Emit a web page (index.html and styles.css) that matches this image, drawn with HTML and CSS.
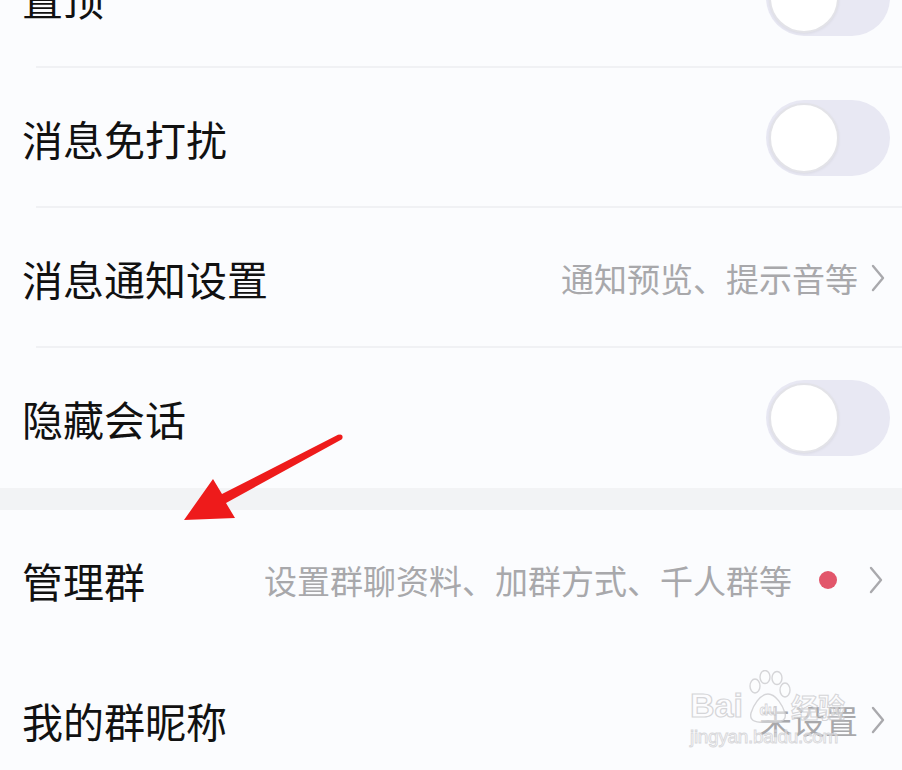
FILE: index.html
```html
<!DOCTYPE html>
<html lang="zh-CN">
<head>
  <meta charset="UTF-8">
  <meta name="viewport" content="width=device-width, initial-scale=1.0">
  <title>群聊设置</title>
  <link rel="stylesheet" href="styles.css">
</head>
<body>
  <div id="screen">
    <div class="lists">
      <div class="group">
        <div class="row">
          <span class="label">置顶</span>
          <span class="switch"><span class="knob"></span></span>
        </div>
        <div class="row">
          <span class="label">消息免打扰</span>
          <span class="switch"><span class="knob"></span></span>
        </div>
        <div class="row link">
          <span class="label">消息通知设置</span>
          <span class="hint">通知预览、提示音等</span>
          <svg class="chevron" viewBox="0 0 16 30"><path d="M3 3 L13 15 L3 27" /></svg>
        </div>
        <div class="row last">
          <span class="label">隐藏会话</span>
          <span class="switch"><span class="knob"></span></span>
        </div>
      </div>
      <div class="group">
        <div class="row link last">
          <span class="label">管理群</span>
          <span class="hint">设置群聊资料、加群方式、千人群等</span>
          <span class="dot"></span>
          <svg class="chevron" viewBox="0 0 16 30"><path d="M3 3 L13 15 L3 27" /></svg>
        </div>
        <div class="row link last">
          <span class="label">我的群昵称</span>
          <span class="hint">未设置</span>
          <svg class="chevron" viewBox="0 0 16 30"><path d="M3 3 L13 15 L3 27" /></svg>
        </div>
      </div>
    </div>

    <!-- red pointer drawn over the list -->
    <svg id="arrow" width="902" height="770" viewBox="0 0 902 770">
      <polygon points="338.5,434.5 222,494 213,479 184,520 235,518 226,503 341.5,439.5" fill="#ee1b1b" />
      <circle cx="340" cy="437" r="2.6" fill="#ee1b1b" />
    </svg>

    <!-- baidu jingyan watermark -->
    <div id="watermark">
      <div class="wm-top">
        <span class="wm-bai">Bai</span>
        <svg class="wm-paw" viewBox="0 0 46 56">
          <ellipse cx="10" cy="16" rx="5" ry="7" />
          <ellipse cx="20" cy="7" rx="5" ry="6.5" />
          <ellipse cx="32" cy="8" rx="5" ry="6.5" />
          <ellipse cx="40" cy="20" rx="5" ry="7" />
          <path d="M23 24 C15 24 8 36 6 43 C4 51 12 54 23 51 C34 54 42 51 40 43 C38 36 31 24 23 24 Z" />
          <text x="23" y="45" text-anchor="middle">du</text>
        </svg>
        <span class="wm-jy">经验</span>
      </div>
      <div class="wm-url">jingyan.baidu.com</div>
    </div>
  </div>
</body>
</html>
```

FILE: styles.css
```css
* {
  margin: 0;
  padding: 0;
  box-sizing: border-box;
}
body {
  background: #fafbfd;
  font-family: "Noto Sans CJK SC", "Noto Sans", sans-serif;
}
#screen {
  position: relative;
  width: 902px;
  height: 770px;
  overflow: hidden;
  background: #f2f3f5;
}
.lists {
  margin-top: -72px;
  display: flex;
  flex-direction: column;
  gap: 22px;
}
.group {
  background: #fbfcfe;
}
.row {
  height: 140px;
  display: flex;
  align-items: center;
  padding: 0 12px 0 22px;
  background: linear-gradient(#f0f1f4, #f0f1f4) 36px 100% / calc(100% - 36px) 2px no-repeat;
}
.row.last {
  background: none;
}
.label {
  flex: 1;
  font-size: 41px;
  line-height: 1;
  color: #111;
  white-space: nowrap;
}
.hint {
  font-size: 33px;
  line-height: 1;
  color: #a8a8ab;
  white-space: nowrap;
}
.dot {
  width: 18px;
  height: 18px;
  margin-left: 27px;
  border-radius: 50%;
  background: #e2566b;
}
.chevron {
  width: 16px;
  height: 30px;
  margin: 0 4px 0 12px;
}
.chevron path {
  fill: none;
  stroke: #a9a9ad;
  stroke-width: 2.4;
  stroke-linecap: round;
  stroke-linejoin: round;
}
.link .dot + .chevron {
  margin-left: 31px;
  margin-right: 6px;
}
.switch {
  width: 124px;
  height: 76px;
  border-radius: 38px;
  background: #e8e8f3;
  display: flex;
  align-items: center;
  padding-left: 3px;
}
.knob {
  width: 70px;
  height: 70px;
  border-radius: 50%;
  background: #fff;
  border: 2px solid #e3e3e8;
  box-shadow: 0 1px 3px rgba(0, 0, 0, 0.06);
}
#arrow {
  position: absolute;
  left: 0;
  top: 0;
  pointer-events: none;
}
#watermark {
  position: absolute;
  left: 690px;
  top: 672px;
  width: 160px;
  opacity: 0.85;
  pointer-events: none;
}
.wm-top {
  display: flex;
  align-items: flex-end;
  height: 54px;
}
.wm-bai {
  font-family: "Liberation Sans", sans-serif;
  font-weight: bold;
  font-size: 34px;
  line-height: 1;
  color: rgba(255, 255, 255, 0.6);
  -webkit-text-stroke: 1.2px #cfcfd2;
  padding-bottom: 4px;
}
.wm-paw {
  width: 46px;
  height: 56px;
  margin-left: 2px;
}
.wm-paw ellipse,
.wm-paw path {
  fill: rgba(255, 255, 255, 0.6);
  stroke: #cfcfd2;
  stroke-width: 1.4;
}
.wm-paw text {
  font-family: "Liberation Sans", sans-serif;
  font-weight: bold;
  font-size: 14px;
  fill: #fff;
  stroke: #cfcfd2;
  stroke-width: 0.8;
}
.wm-jy {
  font-family: "Noto Sans CJK SC", sans-serif;
  font-weight: bold;
  font-size: 27px;
  line-height: 1;
  color: rgba(255, 255, 255, 0.6);
  -webkit-text-stroke: 1px #cfcfd2;
  padding-bottom: 6px;
}
.wm-url {
  font-family: "Liberation Sans", sans-serif;
  font-size: 19px;
  line-height: 22px;
  color: rgba(255, 255, 255, 0.6);
  -webkit-text-stroke: 0.9px #d2d2d5;
  letter-spacing: -0.3px;
}
```
